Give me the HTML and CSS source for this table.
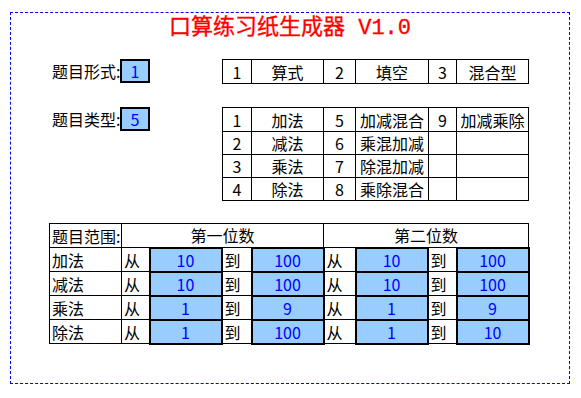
FILE: index.html
```html
<!DOCTYPE html>
<html lang="zh">
<head>
<meta charset="utf-8">
<title>口算练习纸生成器</title>
<link rel="stylesheet" href="styles.css">
</head>
<body>
<div class="sheet">
  <h1 class="title">口算练习纸生成器 V1.0</h1>

  <div class="param-row">
    <div class="label">题目形式:</div>
    <div class="input-box">1</div>
    <table class="grid opt-table">
      <colgroup>
        <col class="c-n1"><col class="c-t1"><col class="c-n2"><col class="c-t2"><col class="c-n3"><col class="c-t3">
      </colgroup>
      <tr class="r24"><td>1</td><td>算式</td><td>2</td><td>填空</td><td>3</td><td>混合型</td></tr>
    </table>
  </div>

  <div class="param-row type-row">
    <div class="label">题目类型:</div>
    <div class="input-box">5</div>
    <table class="grid opt-table">
      <colgroup>
        <col class="c-n1"><col class="c-t1"><col class="c-n2"><col class="c-t2"><col class="c-n3"><col class="c-t3">
      </colgroup>
      <tr class="r24"><td>1</td><td>加法</td><td>5</td><td>加减混合</td><td>9</td><td>加减乘除</td></tr>
      <tr class="r23"><td>2</td><td>减法</td><td>6</td><td>乘混加减</td><td></td><td></td></tr>
      <tr class="r23"><td>3</td><td>乘法</td><td>7</td><td>除混加减</td><td></td><td></td></tr>
      <tr class="r23"><td>4</td><td>除法</td><td>8</td><td>乘除混合</td><td></td><td></td></tr>
    </table>
  </div>

  <table class="grid range-table">
    <colgroup>
      <col class="k-name"><col class="k-from"><col class="k-val"><col class="k-to"><col class="k-val">
      <col class="k-from2"><col class="k-val"><col class="k-to2"><col class="k-val">
    </colgroup>
    <tr class="r24">
      <td class="left nowrap">题目范围:</td>
      <td colspan="4">第一位数</td>
      <td colspan="4">第二位数</td>
    </tr>
    <tr class="r24">
      <td class="left">加法</td><td class="left">从</td><td class="val">10</td><td class="left">到</td><td class="val">100</td>
      <td class="left">从</td><td class="val">10</td><td class="left">到</td><td class="val">100</td>
    </tr>
    <tr class="r24">
      <td class="left">减法</td><td class="left">从</td><td class="val">10</td><td class="left">到</td><td class="val">100</td>
      <td class="left">从</td><td class="val">10</td><td class="left">到</td><td class="val">100</td>
    </tr>
    <tr class="r24">
      <td class="left">乘法</td><td class="left">从</td><td class="val">1</td><td class="left">到</td><td class="val">9</td>
      <td class="left">从</td><td class="val">1</td><td class="left">到</td><td class="val">9</td>
    </tr>
    <tr class="r24">
      <td class="left">除法</td><td class="left">从</td><td class="val">1</td><td class="left">到</td><td class="val">100</td>
      <td class="left">从</td><td class="val">1</td><td class="left">到</td><td class="val">10</td>
    </tr>
  </table>
</div>
</body>
</html>
```

FILE: styles.css
```css
html, body {
  margin: 0;
  padding: 0;
  background: #fff;
}

body {
  font-family: "Noto Sans CJK SC", "Microsoft YaHei", sans-serif;
  font-size: 16px;
  color: #000;
}

.sheet {
  box-sizing: border-box;
  width: 560px;
  height: 372px;
  margin: 12px 0 0 10px;
  border: 1px dashed #0000ff;
  padding: 0 0 0 38px;
}

.title {
  margin: 0 0 14px -38px;
  height: 32px;
  line-height: 32px;
  text-align: center;
  font-family: "Liberation Mono", "Noto Sans CJK SC", monospace;
  font-size: 22px;
  font-weight: normal;
  color: #ff0000;
  -webkit-text-stroke: 0.35px #ff0000;
}

.param-row {
  display: flex;
  align-items: flex-start;
  height: 24px;
}

.type-row {
  margin-top: 24px;
  height: 93px;
}

.label {
  box-sizing: border-box;
  width: 71px;
  height: 24px;
  line-height: 24px;
  padding-left: 3px;
  white-space: nowrap;
}

.input-box {
  box-sizing: border-box;
  position: relative;
  width: 30px;
  height: 24px;
  line-height: 20px;
  border: 2px solid #000;
  background: #99ccff;
  color: #0000ff;
  text-align: center;
}

.grid {
  border-collapse: collapse;
  table-layout: fixed;
}

.grid td {
  border: 1px solid #000;
  padding: 0;
  text-align: center;
  vertical-align: middle;
  line-height: 20px;
  white-space: nowrap;
  overflow: hidden;
}

.opt-table {
  margin-left: 72px;
  width: 306px;
}

.r24 { height: 24px; }
.r23 { height: 23px; }

.c-n1 { width: 29px; }
.c-t1 { width: 72px; }
.c-n2 { width: 32px; }
.c-t2 { width: 73px; }
.c-n3 { width: 28px; }
.c-t3 { width: 72px; }

.range-table {
  margin-top: 23px;
  width: 479px;
}

.k-name { width: 72px; }
.k-from { width: 28px; }
.k-val { width: 72px; }
.k-to { width: 30px; }
.k-from2 { width: 32px; }
.k-to2 { width: 29px; }

.grid td.left {
  text-align: left;
  padding-left: 2px;
}

.grid td.nowrap {
  overflow: visible;
}

.grid td.val {
  border: 2px solid #000;
  background: #99ccff;
  color: #0000ff;
}
```
